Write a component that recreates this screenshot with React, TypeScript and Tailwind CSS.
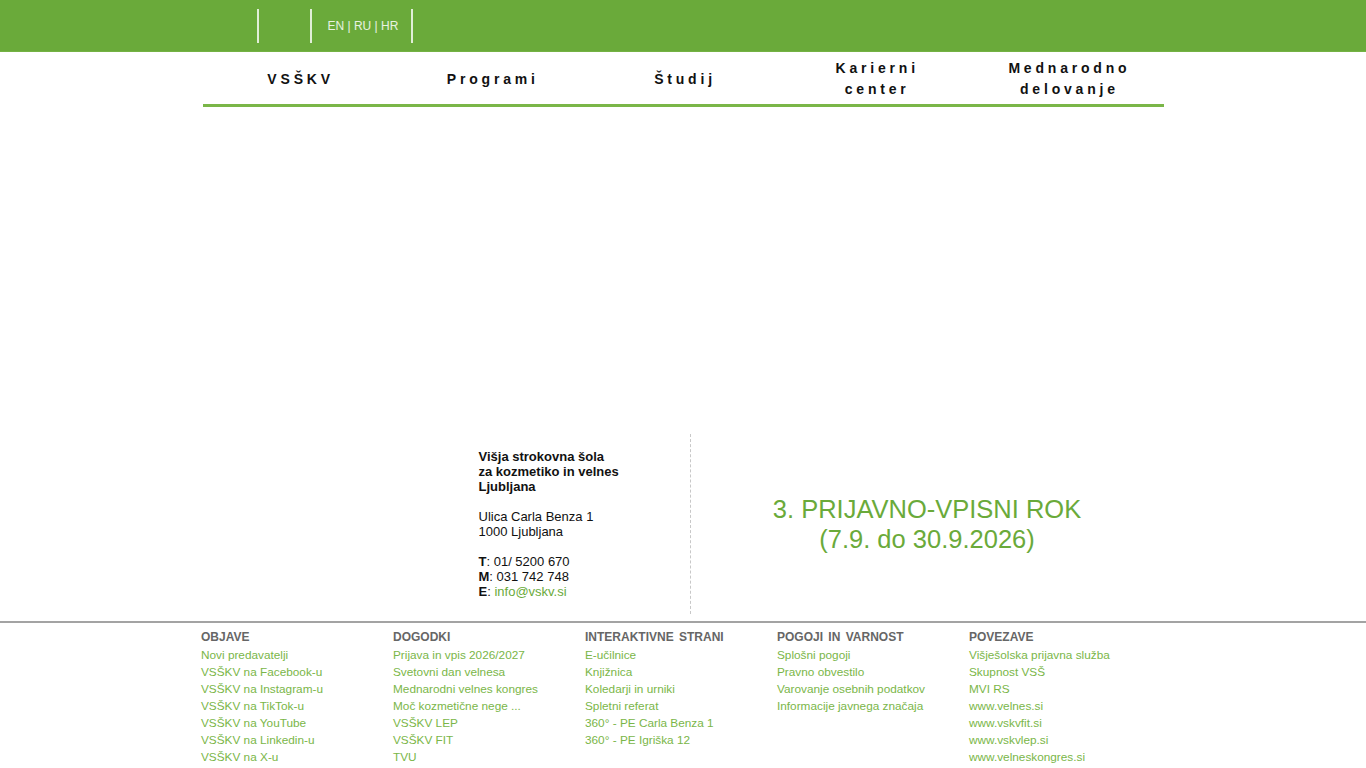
const navItems = [
  ['VSŠKV'],
  ['Programi'],
  ['Študij'],
  ['Karierni', 'center'],
  ['Mednarodno', 'delovanje'],
];

const footerCols: { title: string; links: string[] }[] = [
  {
    title: 'OBJAVE',
    links: [
      'Novi predavatelji',
      'VSŠKV na Facebook-u',
      'VSŠKV na Instagram-u',
      'VSŠKV na TikTok-u',
      'VSŠKV na YouTube',
      'VSŠKV na Linkedin-u',
      'VSŠKV na X-u',
    ],
  },
  {
    title: 'DOGODKI',
    links: [
      'Prijava in vpis 2026/2027',
      'Svetovni dan velnesa',
      'Mednarodni velnes kongres',
      'Moč kozmetične nege ...',
      'VSŠKV LEP',
      'VSŠKV FIT',
      'TVU',
    ],
  },
  {
    title: 'INTERAKTIVNE STRANI',
    links: [
      'E-učilnice',
      'Knjižnica',
      'Koledarji in urniki',
      'Spletni referat',
      '360° - PE Carla Benza 1',
      '360° - PE Igriška 12',
    ],
  },
  {
    title: 'POGOJI IN VARNOST',
    links: ['Splošni pogoji', 'Pravno obvestilo', 'Varovanje osebnih podatkov', 'Informacije javnega značaja'],
  },
  {
    title: 'POVEZAVE',
    links: [
      'Višješolska prijavna služba',
      'Skupnost VSŠ',
      'MVI RS',
      'www.velnes.si',
      'www.vskvfit.si',
      'www.vskvlep.si',
      'www.velneskongres.si',
    ],
  },
];

export default function App() {
  return (
    <div className="min-h-screen bg-white font-['Liberation_Sans',Arial,sans-serif] text-[#111]">
      {/* Top bar */}
      <div className="h-[52px] bg-[#6aaa3a] border-b border-[#74b244]">
        <div className="w-[961px] mx-auto flex h-full items-center">
          <div className="w-[54px]" />
          <div className="w-[55px] h-[34px] border-x-2 border-white/80" />
          <div className="h-[34px] w-[101px] border-r-2 border-white/80 pl-[16px] flex items-center text-[12px] text-white/85">
            EN | RU | HR
          </div>
        </div>
      </div>

      {/* Main navigation */}
      <div className="w-[961px] mx-auto border-b-[3px] border-[#7ab648]">
        <div className="grid grid-cols-5 h-[52px] pt-[2px]">
          {navItems.map((lines) => (
            <a
              key={lines[0]}
              href="#"
              className="flex flex-col items-center justify-center text-[14px] leading-[21px] font-bold tracking-[3.8px] text-[#111] pl-[4px]"
            >
              {lines.map((l) => (
                <span key={l}>{l}</span>
              ))}
            </a>
          ))}
        </div>
      </div>

      {/* Banner area */}
      <div className="h-[327px]" />

      {/* Contact + enrolment notice */}
      <div className="w-[961px] mx-auto flex h-[180px]">
        <div className="w-[276px]" />
        <div className="w-[212px] border-r border-dashed border-[#c8c8c8] py-[15px] text-[13px] leading-[15px]">
          <p className="font-bold">
            Višja strokovna šola
            <br />
            za kozmetiko in velnes
            <br />
            Ljubljana
          </p>
          <p className="mt-[15px]">
            Ulica Carla Benza 1
            <br />
            1000 Ljubljana
          </p>
          <p className="mt-[15px]">
            <b>T</b>: 01/ 5200 670
            <br />
            <b>M</b>: 031 742 748
            <br />
            <b>E</b>:{' '}
            <a href="#" className="text-[#6aaa3a]">
              info@vskv.si
            </a>
          </p>
        </div>
        <div className="flex-1 flex items-center justify-center text-center text-[25.5px] leading-[30px] text-[#6aaa3a]">
          <h2>
            3. PRIJAVNO-VPISNI ROK
            <br />
            (7.9. do 30.9.2026)
          </h2>
        </div>
      </div>

      {/* Footer */}
      <footer className="mt-[7px] border-t-2 border-[#a3a3a3]">
        <div className="w-[960px] mx-auto grid grid-cols-5 pt-[6px] -translate-x-[2px]">
          {footerCols.map((col) => (
            <div key={col.title}>
              <h4 className="text-[12px] leading-[17px] font-bold text-[#666] [word-spacing:2px] mb-[1px]">
                {col.title}
              </h4>
              <ul className="text-[11.8px] leading-[17px]">
                {col.links.map((l) => (
                  <li key={l}>
                    <a href="#" className="text-[#7ab648]">
                      {l}
                    </a>
                  </li>
                ))}
              </ul>
            </div>
          ))}
        </div>
      </footer>
    </div>
  );
}
